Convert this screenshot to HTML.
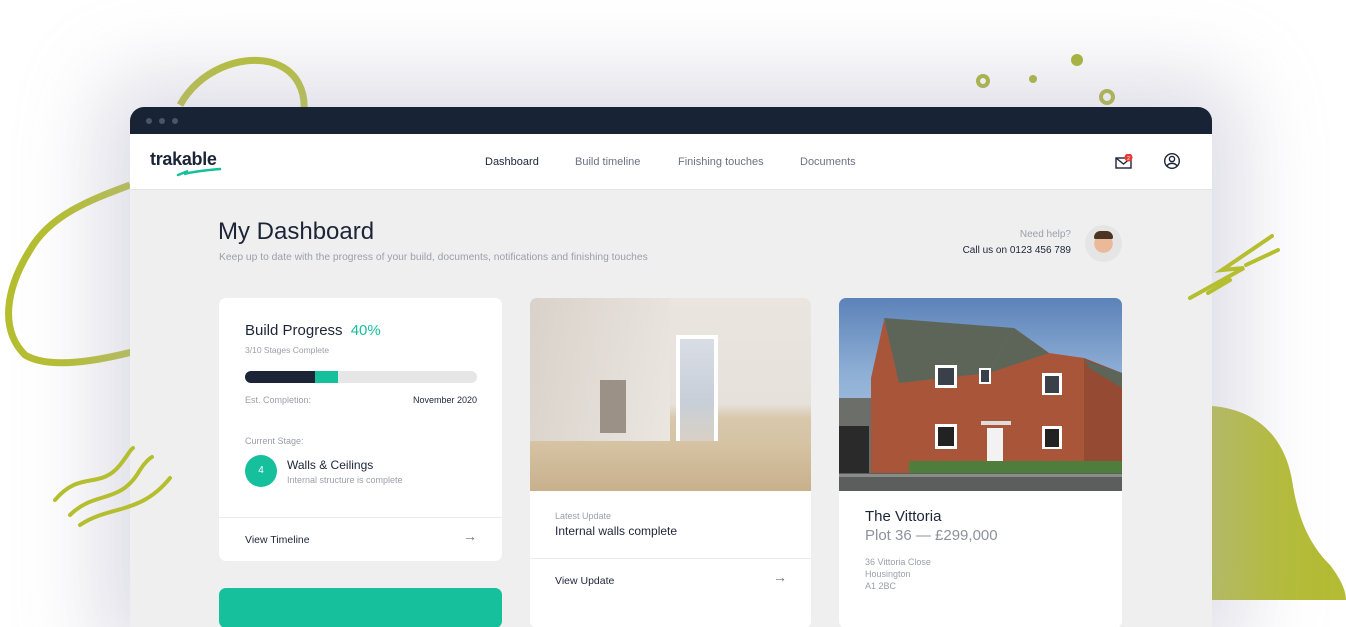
<!DOCTYPE html>
<html><head><meta charset="utf-8"><style>
*{margin:0;padding:0;box-sizing:border-box}
body{width:1346px;height:600px;overflow:hidden;background:#fff;font-family:"Liberation Sans",sans-serif;position:relative;color:#1c2538}
.abs{position:absolute}
.win{left:130px;top:107px;width:1082px;height:520px;background:#efefef;border-radius:14px 14px 0 0;overflow:hidden;box-shadow:0 0 80px 30px rgba(180,180,200,.45)}
.top{height:27px;background:#182335;position:relative}
.dot{position:absolute;top:11px;width:6px;height:6px;border-radius:50%;background:#4a5568}
.nav{height:56px;background:#fff;position:relative;border-bottom:1px solid #e4e4e4}
.nav a{position:absolute;top:22px;font-size:11px;color:#6b7280}
.card{position:absolute;background:#fff;border-radius:7px;overflow:hidden}
.lbl{font-size:9px;color:#9aa0aa}
</style></head><body>
<svg class="abs" style="left:0;top:0" width="1346" height="600">
<path d="M180 105 C200 70 240 55 270 62 C300 70 305 95 304 110" fill="none" stroke="#b5be2f" stroke-width="7"/>
<path d="M130 185 C90 200 50 215 30 250 C5 290 0 330 25 355 C50 370 100 360 132 352" fill="none" stroke="#b5be2f" stroke-width="7"/>
<path d="M1212 406 C1260 410 1285 440 1292 480 C1298 520 1310 545 1330 565 C1340 578 1346 590 1346 600 L1212 600 Z" fill="#b4bc35"/>
<circle cx="983" cy="81" r="5" fill="none" stroke="#a7b22c" stroke-width="4"/>
<circle cx="1033" cy="79" r="4" fill="#a7b22c"/>
<circle cx="1077" cy="60" r="6" fill="#a7b22c"/>
<circle cx="1107" cy="97" r="6" fill="none" stroke="#a7b22c" stroke-width="4"/>
</svg>
<div class="abs win">
 <div class="top"><div class="dot" style="left:16px"></div><div class="dot" style="left:29px"></div><div class="dot" style="left:42px"></div></div>
 <div class="nav">
  <div class="abs" style="left:20px;top:15px;font-size:18px;font-weight:bold;color:#1c2538;letter-spacing:-.3px">trakable</div>
  <svg class="abs" style="left:46px;top:33px" width="46" height="10"><path d="M2 8 L12 4 L8 7 C20 4 32 3 44 2" stroke="#16c09c" stroke-width="2.5" fill="none" stroke-linecap="round"/></svg>
  <a style="left:355px;color:#1c2538">Dashboard</a>
  <a style="left:445px">Build timeline</a>
  <a style="left:548px">Finishing touches</a>
  <a style="left:670px">Documents</a>
  <svg class="abs" style="left:985px;top:20px" width="20" height="16"><rect x="1" y="4" width="15" height="10" fill="none" stroke="#1c2538" stroke-width="1.4"/><path d="M1 4 L8.5 10 L16 4" fill="none" stroke="#1c2538" stroke-width="1.4"/><circle cx="13.5" cy="3.5" r="4" fill="#e53935"/><text x="13.5" y="6" font-size="5" fill="#fff" text-anchor="middle" font-family="Liberation Sans">2</text></svg>
  <svg class="abs" style="left:1033px;top:18px" width="18" height="18"><circle cx="9" cy="9" r="7.3" fill="none" stroke="#1c2538" stroke-width="1.4"/><circle cx="9" cy="7" r="2.6" fill="none" stroke="#1c2538" stroke-width="1.4"/><path d="M4 14 C6 10.5 12 10.5 14 14" fill="none" stroke="#1c2538" stroke-width="1.4"/></svg>
 </div>
 <div class="abs" style="left:88px;top:111px;font-size:24px;color:#1c2538">My Dashboard</div>
 <div class="abs" style="left:89px;top:145px;font-size:10.3px;color:#9aa0aa">Keep up to date with the progress of your build, documents, notifications and finishing touches</div>
 <div class="abs" style="right:141px;top:122px;font-size:10px;color:#9aa0aa;text-align:right">Need help?</div>
 <div class="abs" style="right:141px;top:138px;font-size:10px;color:#1c2538;text-align:right">Call us on 0123 456 789</div>
 <div class="abs" style="left:955px;top:118px;width:37px;height:37px;border-radius:50%;background:radial-gradient(circle at 50% 50%,#e9b99a 0 35%,#e5e5e5 36%)"><div class="abs" style="left:9px;top:6px;width:19px;height:8px;background:#4a3422;border-radius:8px 8px 2px 2px"></div></div>

 <div class="card" style="left:89px;top:191px;width:283px;height:263px">
  <div class="abs" style="left:26px;top:24px;font-size:15px">Build Progress <span style="color:#16c09c;margin-left:4px">40%</span></div>
  <div class="abs lbl" style="left:26px;top:47px;font-size:8.5px">3/10 Stages Complete</div>
  <div class="abs" style="left:26px;top:73px;width:232px;height:12px;border-radius:6px;background:#e6e6e6;overflow:hidden"><div style="width:70px;height:12px;background:#1c2538;float:left"></div><div style="width:23px;height:12px;background:#16c09c;float:left"></div></div>
  <div class="abs lbl" style="left:26px;top:97px">Est. Completion:</div>
  <div class="abs" style="right:25px;top:97px;font-size:9px;color:#1c2538">November 2020</div>
  <div class="abs lbl" style="left:26px;top:138px">Current Stage:</div>
  <div class="abs" style="left:26px;top:157px;width:32px;height:32px;border-radius:50%;background:#16c09c;color:#fff;font-size:10px;text-align:center;line-height:32px">4</div>
  <div class="abs" style="left:68px;top:160px;font-size:12px">Walls &amp; Ceilings</div>
  <div class="abs lbl" style="left:68px;top:177px">Internal structure is complete</div>
  <div class="abs" style="left:0;top:219px;width:283px;border-top:1px solid #ececec"></div>
  <div class="abs" style="left:26px;top:236px;font-size:10.5px">View Timeline</div>
  <div class="abs" style="left:244px;top:230px;font-size:14px;color:#6b7280">→</div>
 </div>
 <div class="abs" style="left:89px;top:481px;width:283px;height:40px;background:#16c09c;border-radius:7px"></div>

 <div class="card" style="left:400px;top:191px;width:281px;height:330px">
  <div class="abs" style="left:0;top:0;width:281px;height:193px;background:linear-gradient(180deg,#ebe5df 0%,#e6e1da 55%,#d9c8ac 62%,#cdb897 100%)"></div>
  <div class="abs" style="left:0;top:0;width:140px;height:150px;background:linear-gradient(100deg,#d8d2ca,#ebe6e0)"></div>
  <div class="abs" style="left:70px;top:82px;width:26px;height:53px;background:#9c9187"></div>
  <div class="abs" style="left:146px;top:37px;width:42px;height:107px;background:#fff"></div>
  <div class="abs" style="left:150px;top:41px;width:34px;height:103px;background:linear-gradient(180deg,#d9dde6,#c8cfd8 60%,#d8d0c4)"></div>
  <div class="abs" style="left:0;top:143px;width:281px;height:50px;background:linear-gradient(180deg,#d6c4a4,#c8b08c)"></div>
  <div class="abs lbl" style="left:25px;top:213px">Latest Update</div>
  <div class="abs" style="left:25px;top:226px;font-size:12px">Internal walls complete</div>
  <div class="abs" style="left:0;top:260px;width:281px;border-top:1px solid #ececec"></div>
  <div class="abs" style="left:25px;top:277px;font-size:10.5px">View Update</div>
  <div class="abs" style="left:243px;top:271px;font-size:14px;color:#6b7280">→</div>
 </div>

 <div class="card" style="left:709px;top:191px;width:283px;height:330px">
  <div class="abs" style="left:0;top:0;width:283px;height:193px;background:linear-gradient(180deg,#5c82b8,#8fb0d6 40%,#b9cde3)"></div>
  <svg class="abs" style="left:0;top:0" width="283" height="193">
   <rect x="0" y="100" width="40" height="75" fill="#6c6e6a"/>
   <rect x="0" y="128" width="30" height="47" fill="#2a2a2a"/>
   <polygon points="32,175 32,80 45,22 60,60 60,175" fill="#a8553a"/>
   <polygon points="60,60 60,175 245,175 245,60 210,55 175,30 150,75" fill="#a8553a"/>
   <polygon points="245,60 283,75 283,175 245,175" fill="#944a33"/>
   <polygon points="45,20 175,30 150,75 60,85" fill="#5d6558"/>
   <polygon points="175,30 210,55 150,75" fill="#5d6558"/>
   <polygon points="245,62 283,75 283,90 250,70" fill="#5d6558"/>
   <rect x="96" y="67" width="22" height="23" fill="#fff"/><rect x="99" y="70" width="16" height="17" fill="#39404a"/>
   <rect x="140" y="70" width="12" height="16" fill="#fff"/><rect x="142" y="72" width="8" height="12" fill="#39404a"/>
   <rect x="203" y="75" width="20" height="22" fill="#fff"/><rect x="206" y="78" width="14" height="17" fill="#39404a"/>
   <rect x="96" y="126" width="22" height="25" fill="#fff"/><rect x="99" y="129" width="16" height="19" fill="#222"/>
   <rect x="203" y="128" width="20" height="23" fill="#fff"/><rect x="206" y="131" width="14" height="18" fill="#222"/>
   <rect x="148" y="130" width="16" height="36" fill="#f2f2f2"/>
   <rect x="142" y="123" width="30" height="4" fill="#ddd"/>
   <rect x="70" y="163" width="213" height="12" fill="#4f7d3c"/>
   <rect x="0" y="175" width="283" height="18" fill="#5b5e5d"/>
   <rect x="0" y="176" width="283" height="3" fill="#8a8c88"/>
  </svg>
  <div class="abs" style="left:26px;top:210px;font-size:15px">The Vittoria</div>
  <div class="abs" style="left:26px;top:229px;font-size:15px;color:#8d939c">Plot 36 — £299,000</div>
  <div class="abs lbl" style="left:26px;top:258px;line-height:12px">36 Vittoria Close<br>Housington<br>A1 2BC</div>
 </div>
</div>
<svg class="abs" style="left:0;top:0" width="1346" height="600">
<path d="M55 500 C80 470 100 490 120 465 C128 455 130 450 133 448 M70 515 C95 490 120 505 140 470 C145 462 150 458 152 457 M80 525 C110 505 140 515 170 478" fill="none" stroke="#b5be2f" stroke-width="4" stroke-linecap="round"/>
<path d="M1272 236 L1222 270 L1244 268 L1190 298 M1278 250 L1246 265 M1230 280 L1208 293" fill="none" stroke="#b5be2f" stroke-width="4" stroke-linecap="round"/>
</svg>
</body></html>
